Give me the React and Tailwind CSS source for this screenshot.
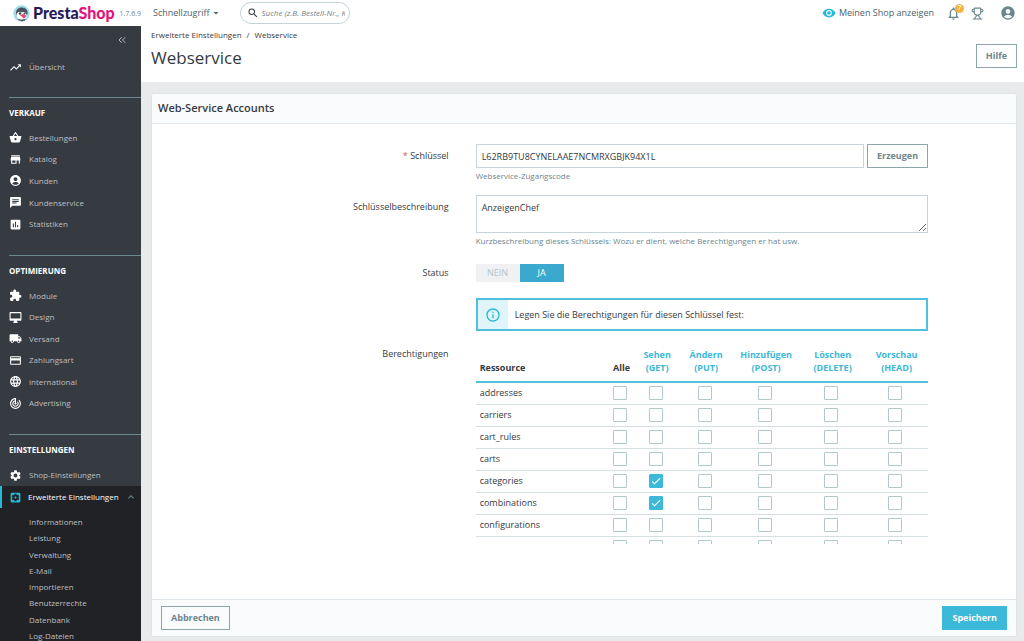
import { useState } from 'react';
import {
  MdTrendingUp,
  MdShoppingBasket,
  MdStore,
  MdAccountCircle,
  MdChat,
  MdAssessment,
  MdExtension,
  MdOutlineDesktopMac,
  MdLocalShipping,
  MdPayment,
  MdLanguage,
  MdTrackChanges,
  MdSettings,
  MdSettingsApplications,
  MdKeyboardArrowUp,
  MdVisibility,
  MdNotificationsNone,
  MdInfoOutline,
  MdSearch,
  MdArrowDropDown,
  MdCheck,
} from 'react-icons/md';
import { ChevronsLeft, Trophy } from 'lucide-react';

const sections = [
  {
    title: 'VERKAUF',
    items: [
      { label: 'Bestellungen', Icon: MdShoppingBasket },
      { label: 'Katalog', Icon: MdStore },
      { label: 'Kunden', Icon: MdAccountCircle },
      { label: 'Kundenservice', Icon: MdChat },
      { label: 'Statistiken', Icon: MdAssessment },
    ],
    listClass: 'h-[108px] mb-5',
  },
  {
    title: 'OPTIMIERUNG',
    items: [
      { label: 'Module', Icon: MdExtension },
      { label: 'Design', Icon: MdOutlineDesktopMac },
      { label: 'Versand', Icon: MdLocalShipping },
      { label: 'Zahlungsart', Icon: MdPayment },
      { label: 'international', Icon: MdLanguage },
      { label: 'Advertising', Icon: MdTrackChanges },
    ],
    listClass: 'h-[129px] mb-5',
  },
  {
    title: 'EINSTELLUNGEN',
    items: [{ label: 'Shop-Einstellungen', Icon: MdSettings }],
    listClass: 'h-[22px]',
  },
];

const subItems = [
  'Informationen',
  'Leistung',
  'Verwaltung',
  'E-Mail',
  'Importieren',
  'Benutzerrechte',
  'Datenbank',
  'Log-Dateien',
];

const methods = [
  { name: 'Sehen', verb: 'GET' },
  { name: 'Ändern', verb: 'PUT' },
  { name: 'Hinzufügen', verb: 'POST' },
  { name: 'Löschen', verb: 'DELETE' },
  { name: 'Vorschau', verb: 'HEAD' },
];

const resources = [
  'addresses',
  'carriers',
  'cart_rules',
  'carts',
  'categories',
  'combinations',
  'configurations',
  '',
];

function Logo() {
  return (
    <a href="#" className="flex items-center gap-[3px] ml-[13px]">
      <svg viewBox="0 0 34 34" className="w-[17px] h-[17px]">
        <circle cx="17" cy="17" r="16.5" fill="#a4dbe8" />
        <path d="M6 19C5 10 10 5 18 5c8 0 12 6 11 13l-2 3-18 1z" fill="#4a5361" />
        <path d="M7 18c3-5 8-6 11-3 4-2 8 0 9 4l-1 9c-5 5-13 5-17 0z" fill="#fff" />
        <circle cx="14" cy="17" r="2.4" fill="#3b4453" />
        <circle cx="23" cy="17" r="2" fill="#3b4453" />
        <path d="M14 21c4-4 11-3 12 1 0 3-3 5-6 5 0-3-3-5-6-6z" fill="#e0467c" />
        <path d="M8 26c5 4 13 4 18 1l-2 4c-4 2-10 2-13-1z" fill="#4a5361" />
      </svg>
      <span className="font-['Lato'] font-black text-[16px] leading-none text-[#251b5b]">
        Presta<span className="text-[#e5127d]">Shop</span>
      </span>
    </a>
  );
}

function Header() {
  return (
    <header className="flex items-center h-[26px] shrink-0 bg-white text-[9px] text-[#4f6168]">
      <div className="flex items-center w-[141px] shrink-0">
        <Logo />
        <span className="ml-auto mt-[3px] text-[7px] text-[#6c868e]">1.7.6.9</span>
      </div>
      <button className="flex items-center ml-3">
        Schnellzugriff
        <MdArrowDropDown className="w-3 h-3" />
      </button>
      <label className="flex items-center ml-[18px] w-[110px] h-[22px] pl-[6px] pr-1 border border-[#c4d4d8] rounded-full">
        <MdSearch className="w-3 h-3 shrink-0 text-[#363a41]" />
        <input
          type="text"
          aria-label="Suche"
          placeholder="Suche (z.B. Bestell-Nr., Kunde)"
          className="ml-[3px] min-w-0 flex-1 italic text-[8px] placeholder:text-[#6c868e] focus:outline-none"
        />
      </label>
      <div className="flex items-center ml-auto mr-2 text-[#6c868e]">
        <a href="#" className="flex items-center gap-[3px] text-[#4f6168]">
          <MdVisibility className="w-[14px] h-[14px] text-[#25b9d7]" />
          Meinen Shop anzeigen
        </a>
        <button className="relative ml-3" aria-label="Benachrichtigungen">
          <MdNotificationsNone className="w-[15px] h-[15px]" />
          <span className="absolute -top-[2px] -right-[3px] flex items-center justify-center w-[9px] h-[9px] rounded-full bg-[#fbb03b] text-[7px] font-semibold text-white">
            7
          </span>
        </button>
        <button className="ml-[10px]" aria-label="Erfolge">
          <Trophy className="w-[13px] h-[13px]" />
        </button>
        <button className="ml-4" aria-label="Profil">
          <MdAccountCircle className="w-4 h-4" />
        </button>
      </div>
    </header>
  );
}

function NavItem({ label, Icon }) {
  return (
    <li className="flex">
      <a href="#" className="flex flex-1 items-center gap-[7px] pl-[9px]">
        <Icon className="w-[13px] h-[13px] text-white" />
        {label}
      </a>
    </li>
  );
}

function Sidebar() {
  return (
    <nav className="w-[141px] shrink-0 overflow-hidden bg-[#363a41] text-[8px] text-[#bebfc2]">
      <div className="flex items-start justify-end pt-2 pr-[13px] h-[30px]">
        <button aria-label="Menü einklappen">
          <ChevronsLeft className="w-3 h-3" />
        </button>
      </div>
      <ul className="grid h-[22px] mb-[19px]">
        <NavItem label="Übersicht" Icon={MdTrendingUp} />
      </ul>
      {sections.map((section) => (
        <div key={section.title}>
          <h2 className="flex items-center ml-[9px] h-[30px] border-t border-[#6c868e] font-bold text-white">
            {section.title}
          </h2>
          <ul className={`grid auto-rows-fr ${section.listClass}`}>
            {section.items.map((item) => (
              <NavItem key={item.label} {...item} />
            ))}
          </ul>
        </div>
      ))}
      <div className="bg-[#202226] pb-4">
        <a
          href="#"
          className="flex items-center h-[22px] pl-[7px] pr-1 border-l-2 border-[#25b9d7] text-white"
        >
          <MdSettingsApplications className="w-[13px] h-[13px] mr-[6px] text-[#25b9d7]" />
          Erweiterte Einstellungen
          <MdKeyboardArrowUp className="w-3 h-3 ml-auto text-[#6c868e]" />
        </a>
        <ul className="grid auto-rows-fr items-center h-[130px] mt-[6px] pl-[29px]">
          {subItems.map((item) => (
            <li key={item}>
              <a href="#">{item}</a>
            </li>
          ))}
        </ul>
      </div>
    </nav>
  );
}

function PageHead() {
  return (
    <div className="flex items-start justify-between h-14 shrink-0 bg-white pl-[10px] pr-[7px]">
      <div>
        <div className="flex gap-[5px] pt-[3px] text-[8px] leading-3">
          <a href="#">Erweiterte Einstellungen</a>
          <span>/</span>
          <a href="#">Webservice</a>
        </div>
        <h1 className="mt-[5px] text-[17px] leading-6">Webservice</h1>
      </div>
      <button className="mt-[18px] h-6 px-[9px] border border-[#8fa5ac] text-[9px] font-bold text-[#6c868e]">
        Hilfe
      </button>
    </div>
  );
}

// one form line: right-aligned label, field, empty space on the right
function Row({ label, htmlFor, required, className = '', labelClass = 'pt-[5px]', children }) {
  return (
    <div className={`grid grid-cols-[324fr_453fr_88fr] ${className}`}>
      <label htmlFor={htmlFor} className={`pr-[27px] text-right leading-[14px] ${labelClass}`}>
        {required && <span className="text-[#c05c67]">* </span>}
        {label}
      </label>
      <div className="min-w-0">{children}</div>
    </div>
  );
}

function StatusSwitch() {
  const [active, setActive] = useState(true);
  return (
    <div className="flex w-[88px] h-[18px]" role="radiogroup" aria-label="Status">
      <label className="flex flex-1 items-center justify-center bg-[#eff1f2] text-[#b3c7cd] has-checked:bg-[#3aa9cd] has-checked:text-white">
        <input
          type="radio"
          name="status"
          className="sr-only"
          checked={!active}
          onChange={() => setActive(false)}
        />
        NEIN
      </label>
      <label className="flex flex-1 items-center justify-center bg-[#eff1f2] text-[#b3c7cd] has-checked:bg-[#3aa9cd] has-checked:text-white">
        <input
          type="radio"
          name="status"
          className="sr-only"
          checked={active}
          onChange={() => setActive(true)}
        />
        JA
      </label>
    </div>
  );
}

function Checkbox({ label, checked, onChange }) {
  return (
    <span className="grid w-[14px] h-[14px] mx-auto">
      <input
        type="checkbox"
        aria-label={label}
        checked={checked}
        onChange={onChange}
        className="peer col-start-1 row-start-1 w-[14px] h-[14px] appearance-none border border-[#b3c7cd] rounded-[1px] bg-white checked:border-[#3cb8d8] checked:bg-[#3cb8d8]"
      />
      <MdCheck className="hidden peer-checked:block pointer-events-none col-start-1 row-start-1 w-3 h-3 m-px text-white" />
    </span>
  );
}

function PermissionTable() {
  const [granted, setGranted] = useState({
    'categories:GET': true,
    'combinations:GET': true,
  });

  const toggle = (key) => setGranted({ ...granted, [key]: !granted[key] });

  const toggleAll = (resource, value) => {
    const next = { ...granted };
    methods.forEach(({ verb }) => {
      next[`${resource}:${verb}`] = value;
    });
    setGranted(next);
  };

  return (
    <div className="h-[202px] overflow-hidden">
      <table className="w-full table-fixed border-collapse">
        <colgroup>
          <col />
          <col className="w-[25px]" />
          <col className="w-[46px]" />
          <col className="w-[52px]" />
          <col className="w-[68px]" />
          <col className="w-[65px]" />
          <col className="w-[63px]" />
        </colgroup>
        <thead>
          <tr className="h-[40px] border-b-2 border-[#4fc1dc] align-bottom leading-[13px]">
            <th className="pb-[7px] pl-[4px] text-left font-bold">Ressource</th>
            <th className="pb-[7px] font-bold">Alle</th>
            {methods.map(({ name, verb }) => (
              <th key={verb} className="pb-[7px] font-bold text-[#3cb8d8]">
                {name}
                <br />({verb})
              </th>
            ))}
          </tr>
        </thead>
        <tbody>
          {resources.map((resource) => (
            <tr key={resource} className="h-[22px] border-b border-[#d5e0e3] leading-3">
              <td className="pl-[4px]">{resource}</td>
              <td className="pr-[3px]">
                <Checkbox
                  label={`${resource} Alle`}
                  checked={methods.every(({ verb }) => granted[`${resource}:${verb}`])}
                  onChange={(e) => toggleAll(resource, e.target.checked)}
                />
              </td>
              {methods.map(({ name, verb }) => (
                <td key={verb} className="pr-[3px]">
                  <Checkbox
                    label={`${resource} ${name}`}
                    checked={!!granted[`${resource}:${verb}`]}
                    onChange={() => toggle(`${resource}:${verb}`)}
                  />
                </td>
              ))}
            </tr>
          ))}
        </tbody>
      </table>
    </div>
  );
}

function AccountForm() {
  return (
    <form
      className="flex flex-col flex-1 min-h-0 ml-[10px] mr-[7px] mt-[11px] mb-1 bg-white border border-[#dfe6e9] rounded-[3px] text-[9px]"
      onSubmit={(e) => e.preventDefault()}
    >
      <h2 className="flex items-center h-[30px] shrink-0 px-[6px] border-b border-[#dfe6e9] rounded-t-[3px] bg-[#fafbfc] text-[11px] font-semibold">
        Web-Service Accounts
      </h2>

      <div className="flex-1 min-h-0 overflow-hidden pt-5">
        <Row label="Schlüssel" htmlFor="key" required>
          <div className="flex gap-[3px]">
            <input
              id="key"
              type="text"
              defaultValue="L62RB9TU8CYNELAAE7NCMRXGBJK94X1L"
              className="flex-1 min-w-0 h-6 px-[5px] border border-[#c4d4d8] focus:outline-none"
            />
            <button
              type="button"
              className="h-6 px-[9px] border border-[#8fa5ac] font-bold text-[#6c868e]"
            >
              Erzeugen
            </button>
          </div>
          <p className="mt-[2px] text-[8px] leading-3 text-[#6c868e]">Webservice-Zugangscode</p>
        </Row>

        <Row label="Schlüsselbeschreibung" htmlFor="description" className="mt-[13px]">
          <textarea
            id="description"
            defaultValue="AnzeigenChef"
            className="block w-full h-[38px] px-[5px] py-[5px] leading-[14px] border border-[#c4d4d8] resize-y focus:outline-none"
          />
          <p className="mt-[2px] text-[8px] leading-3 text-[#6c868e]">
            Kurzbeschreibung dieses Schlüssels: Wozu er dient, welche Berechtigungen er hat usw.
          </p>
        </Row>

        <Row label="Status" className="mt-[17px]" labelClass="pt-[2px]">
          <StatusSwitch />
        </Row>

        <Row className="mt-4">
          <div className="flex items-center h-[33px] border-2 border-[#4fc1dc]">
            <span className="flex items-center justify-center self-stretch w-[30px] bg-[#dff5f9]">
              <MdInfoOutline className="w-4 h-4 text-[#25b9d7]" />
            </span>
            <p className="ml-[7px]">Legen Sie die Berechtigungen für diesen Schlüssel fest:</p>
          </div>
        </Row>

        <Row label="Berechtigungen" className="mt-[11px]">
          <PermissionTable />
        </Row>
      </div>

      <div className="flex items-center justify-between h-[37px] shrink-0 px-[9px] border-t border-[#dfe6e9] rounded-b-[3px] bg-[#fafbfc]">
        <button
          type="button"
          className="h-6 px-[9px] border border-[#8fa5ac] font-bold text-[#6c868e]"
        >
          Abbrechen
        </button>
        <button type="submit" className="h-6 px-[10px] bg-[#3cb8d8] font-bold text-white">
          Speichern
        </button>
      </div>
    </form>
  );
}

export default function App() {
  return (
    <div className="flex flex-col h-screen overflow-hidden bg-[#e9eaec] font-['Open_Sans',sans-serif] text-[#363a41]">
      <Header />
      <div className="flex flex-1 min-h-0">
        <Sidebar />
        <main className="flex flex-col flex-1 min-w-0">
          <PageHead />
          <AccountForm />
        </main>
      </div>
    </div>
  );
}
